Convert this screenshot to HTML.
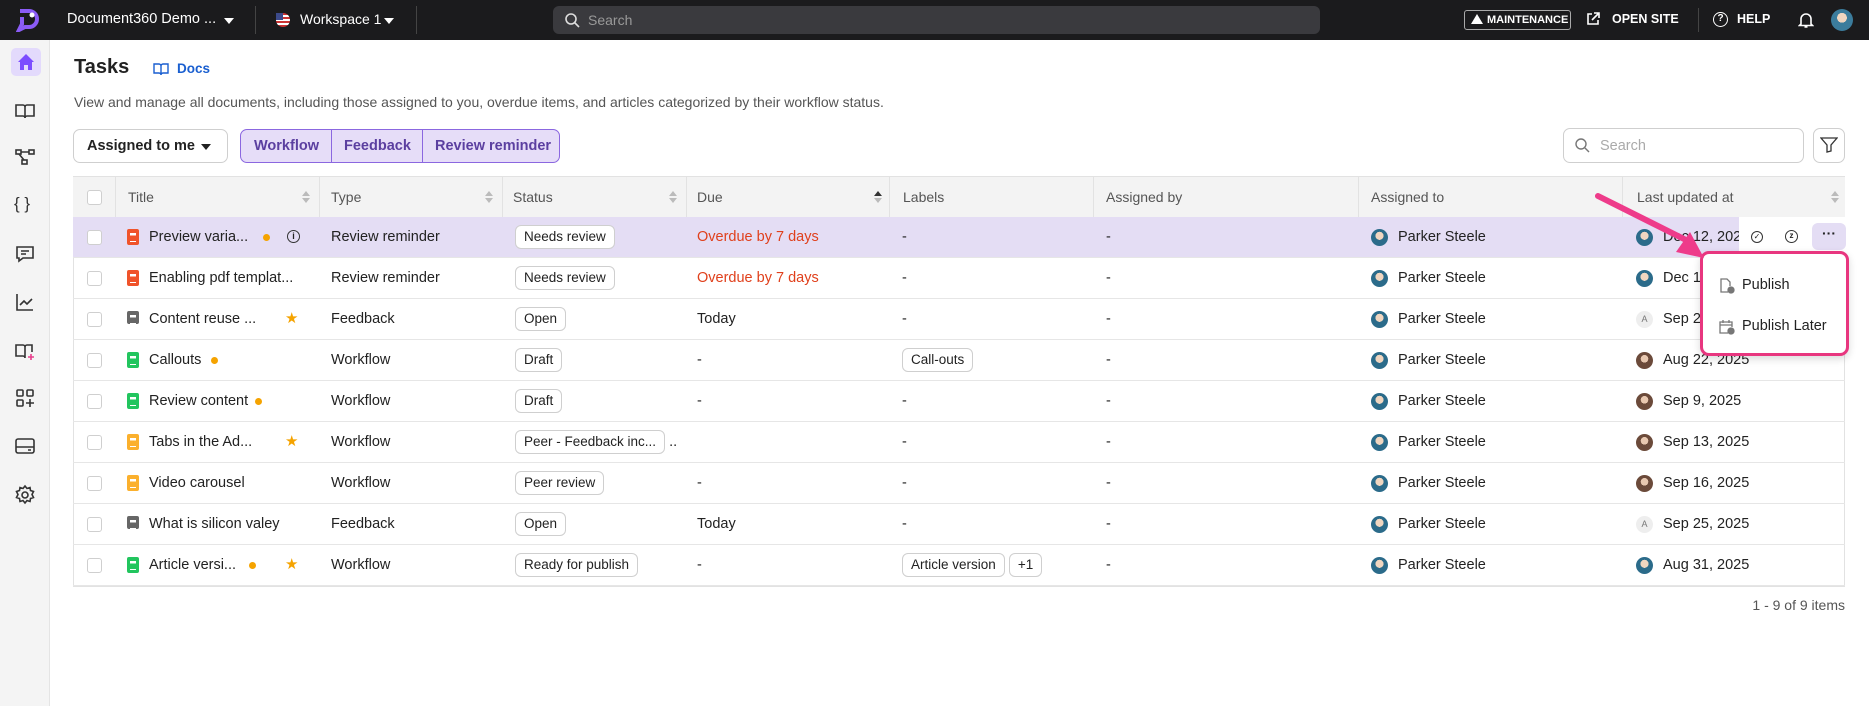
<!DOCTYPE html>
<html><head><meta charset="utf-8"><style>
*{box-sizing:border-box;margin:0;padding:0}
body{width:1869px;height:706px;overflow:hidden;background:#fff;font-family:"Liberation Sans",sans-serif;font-size:14px;color:#222;position:relative}
.a{position:absolute}
.top{left:0;top:0;width:1869px;height:40px;background:#1b1b1d;color:#fff}
.side{left:0;top:40px;width:50px;height:666px;background:#f4f4f4;border-right:1px solid #e4e4e4}
.si{position:absolute;left:14px;width:22px;height:22px}
.row{position:absolute;left:73px;width:1772px;height:41px;border-bottom:1px solid #e6e6e6}
.c{position:absolute;top:0;height:40px;line-height:40px;white-space:nowrap;font-size:14.5px}
.cb{position:absolute;left:14px;top:13px;width:15px;height:15px;border:1px solid #cfcfcf;border-radius:3px;background:#fff}
.badge{display:inline-block;height:24px;line-height:22px;padding:0 8px;border:1px solid #cfcfcf;border-radius:6px;background:#fff;font-size:13.5px;vertical-align:middle}
.av{position:absolute;top:12px;width:17px;height:17px;border-radius:50%;background:radial-gradient(circle at 50% 40%,#f0d6c0 0 30%,#2b6b8a 31%)}
.avw{background:radial-gradient(circle at 50% 40%,#e8c8b0 0 28%,#6b4a3a 29%)}
.avA{background:#eee;color:#777;font-size:9px;line-height:17px;text-align:center}
.doc{position:absolute;left:54px;top:12px;width:12px;height:16px;border-radius:2px}
.doc:after{content:"";position:absolute;left:3px;top:4px;width:6px;height:7px;border-top:1.5px solid #fff;border-bottom:1.5px solid #fff;box-shadow:inset 0 3px 0 -1.5px #fff}
.dot{position:absolute;top:17px;width:7px;height:7px;border-radius:50%;background:#f5a300}
.star{position:absolute;top:0;color:#f5a300;font-size:15px}
.hd{position:absolute;top:0;height:40px;line-height:40px;color:#555;font-size:14px}
.sep{position:absolute;top:0;width:1px;height:40px;background:#e2e2e2}
</style></head><body>
<div class="a top">
 <svg class="a" style="left:16px;top:8px" width="24" height="24" viewBox="0 0 24 24"><path d="M4 3h9a8 8 0 0 1 0 16H9l-6 3 3-6V9" fill="none" stroke="#8b5cf6" stroke-width="4"/><circle cx="16" cy="7" r="2.5" fill="#fff"/></svg>
 <div class="a" style="left:67px;top:11px;font-size:14.5px">Document360 Demo ...</div>
 <div class="a" style="left:224px;top:18px;border-left:5px solid transparent;border-right:5px solid transparent;border-top:6px solid #fff"></div>
 <div class="a" style="left:255px;top:6px;width:1px;height:28px;background:#444"></div>
 <div class="a" style="left:276px;top:13px;width:14px;height:14px;border-radius:50%;background:repeating-linear-gradient(#c33 0 2px,#fff 2px 4px)"><div style="width:7px;height:7px;background:#3c4a8a"></div></div>
 <div class="a" style="left:300px;top:11px;font-size:14px">Workspace 1</div>
 <div class="a" style="left:384px;top:18px;border-left:5px solid transparent;border-right:5px solid transparent;border-top:6px solid #fff"></div>
 <div class="a" style="left:416px;top:6px;width:1px;height:28px;background:#444"></div>
 <div class="a" style="left:553px;top:6px;width:767px;height:28px;background:#3a3a3e;border-radius:6px"></div>
 <svg class="a" style="left:564px;top:12px" width="16" height="16" viewBox="0 0 16 16"><circle cx="7" cy="7" r="5" fill="none" stroke="#ddd" stroke-width="1.6"/><path d="M11 11l4 4" stroke="#ddd" stroke-width="1.6"/></svg>
 <div class="a" style="left:588px;top:12px;color:#999;font-size:14px">Search</div>
 <div class="a" style="left:1464px;top:10px;width:107px;height:20px;border:1px solid #aaa;border-radius:3px;font-size:11px;font-weight:bold;line-height:18px;padding-left:22px">MAINTENANCE</div>
 <div class="a" style="left:1471px;top:14px;border-left:6px solid transparent;border-right:6px solid transparent;border-bottom:10px solid #fff"></div>
 <svg class="a" style="left:1585px;top:11px" width="16" height="16" viewBox="0 0 16 16"><path d="M7 3H3v10h10V9M9 2h5v5M14 2L7 9" fill="none" stroke="#fff" stroke-width="1.6"/></svg>
 <div class="a" style="left:1612px;top:12px;font-size:12.5px;font-weight:bold">OPEN SITE</div>
 <div class="a" style="left:1698px;top:8px;width:1px;height:24px;background:#444"></div>
 <div class="a" style="left:1713px;top:12px;width:15px;height:15px;border:1.6px solid #fff;border-radius:50%;font-size:10px;font-weight:bold;text-align:center;line-height:12px">?</div>
 <div class="a" style="left:1737px;top:12px;font-size:12.5px;font-weight:bold">HELP</div>
 <svg class="a" style="left:1798px;top:11px" width="16" height="18" viewBox="0 0 16 18"><path d="M3 13V8a5 5 0 0 1 10 0v5l1.5 1.5h-13z M6.5 16h3" fill="none" stroke="#fff" stroke-width="1.6"/></svg>
 <div class="a" style="left:1831px;top:9px;width:22px;height:22px;border-radius:50%;background:radial-gradient(circle at 50% 40%,#f0d6c0 0 28%,#3b7c9c 29%)"></div>
</div>
<div class="a side">
 <div class="a" style="left:11px;top:8px;width:30px;height:28px;border-radius:5px;background:#e3dafc"></div>
 <svg class="si" style="top:11px;left:15px" viewBox="0 0 22 22"><path d="M3 11L11 3l8 8h-2v8h-4v-5H9v5H5v-8z" fill="#7c4dff"/></svg>
 <svg class="si" style="top:60px" viewBox="0 0 22 22" fill="none" stroke="#333" stroke-width="1.6"><path d="M2 5h7a2 2 0 0 1 2 2v11a2 2 0 0 0-2-2H2zM20 5h-7a2 2 0 0 0-2 2v11a2 2 0 0 1 2-2h7z"/></svg>
 <svg class="si" style="top:106px" viewBox="0 0 22 22" fill="none" stroke="#333" stroke-width="1.6"><rect x="2" y="4" width="5" height="4"/><rect x="15" y="4" width="5" height="4"/><rect x="8" y="14" width="5" height="4"/><path d="M7 6h8M5 8l5 6"/></svg>
 <div class="a" style="left:14px;top:154px;font-size:17px;color:#333">{ }</div>
 <svg class="si" style="top:203px" viewBox="0 0 22 22" fill="none" stroke="#333" stroke-width="1.6"><path d="M3 4h16v11H9l-4 3v-3H3z M7 8h8M7 11h5"/></svg>
 <svg class="si" style="top:251px" viewBox="0 0 22 22" fill="none" stroke="#333" stroke-width="1.6"><path d="M3 3v16h16M6 14l4-4 3 3 5-5"/></svg>
 <svg class="si" style="top:300px" viewBox="0 0 22 22" fill="none" stroke="#333" stroke-width="1.6"><path d="M2 5h7a2 2 0 0 1 2 2v11a2 2 0 0 0-2-2H2zM18 12V5h-5a2 2 0 0 0-2 2"/><path d="M17 14v6M14 17h6" stroke="#e83e8c"/></svg>
 <svg class="si" style="top:347px" viewBox="0 0 22 22" fill="none" stroke="#333" stroke-width="1.6"><rect x="3" y="3" width="6" height="6" rx="1"/><rect x="13" y="3" width="6" height="6" rx="1"/><rect x="3" y="13" width="6" height="6" rx="1"/><path d="M16 12v8M12 16h8"/></svg>
 <svg class="si" style="top:395px" viewBox="0 0 22 22" fill="none" stroke="#333" stroke-width="1.6"><rect x="2" y="4" width="18" height="14" rx="2"/><path d="M2 12h18M14 15h3"/></svg>
 <svg class="si" style="top:444px" viewBox="0 0 22 22" fill="none" stroke="#333" stroke-width="1.6"><circle cx="11" cy="11" r="3"/><path d="M11 2l2 2.5 3-1 .5 3 3 1-1.5 3 1.5 3-3 1-.5 3-3-1-2 2.5-2-2.5-3 1-.5-3-3-1 1.5-3-1.5-3 3-1 .5-3 3 1z"/></svg>
</div>

<div class="a" style="left:74px;top:56px;font-size:20px;font-weight:bold;color:#222">Tasks</div>
<svg class="a" style="left:153px;top:62px" width="16" height="14" viewBox="0 0 16 14" fill="none" stroke="#1a5fd0" stroke-width="1.4"><path d="M1 2h5a2 2 0 0 1 2 2v9a2 2 0 0 0-2-2H1zM15 2h-5a2 2 0 0 0-2 2v9a2 2 0 0 1 2-2h5z"/></svg>
<div class="a" style="left:177px;top:61px;font-size:13.5px;color:#1a5fd0;font-weight:bold">Docs</div>
<div class="a" style="left:74px;top:94px;font-size:14px;color:#555">View and manage all documents, including those assigned to you, overdue items, and articles categorized by their workflow status.</div>

<div class="a" style="left:73px;top:129px;width:155px;height:34px;border:1px solid #cfcfcf;border-radius:7px;padding-left:13px;line-height:32px;font-size:14.5px;font-weight:bold;color:#222">Assigned to me</div>
<div class="a" style="left:201px;top:144px;border-left:5px solid transparent;border-right:5px solid transparent;border-top:6px solid #222"></div>
<div class="a" style="left:240px;top:129px;width:320px;height:34px;border:1px solid #8b67e0;border-radius:7px;background:#e6ddf8;color:#5b3fa0;font-size:14.5px;font-weight:bold;line-height:32px">
 <span class="a" style="left:13px">Workflow</span><span class="a" style="left:90px;top:0;width:1px;height:32px;background:#8b67e0"></span>
 <span class="a" style="left:103px">Feedback</span><span class="a" style="left:181px;top:0;width:1px;height:32px;background:#8b67e0"></span>
 <span class="a" style="left:194px">Review reminder</span>
</div>
<div class="a" style="left:1563px;top:128px;width:241px;height:35px;border:1px solid #cfcfcf;border-radius:7px"></div>
<svg class="a" style="left:1574px;top:137px" width="16" height="16" viewBox="0 0 16 16"><circle cx="7" cy="7" r="5" fill="none" stroke="#777" stroke-width="1.4"/><path d="M11 11l4 4" stroke="#777" stroke-width="1.4"/></svg>
<div class="a" style="left:1600px;top:138px;color:#aaa;font-size:14.5px">Search</div>
<div class="a" style="left:1813px;top:128px;width:32px;height:35px;border:1px solid #cfcfcf;border-radius:7px"></div>
<svg class="a" style="left:1820px;top:137px" width="18" height="16" viewBox="0 0 18 16"><path d="M1 1h16l-6 7v6l-4 1V8z" fill="none" stroke="#333" stroke-width="1.3"/></svg>

<div class="a" style="left:73px;top:176px;width:1772px;height:411px;border:1px solid #e2e2e2"></div>
<div class="row" style="top:177px;background:#f3f3f3">
 <div class="cb"></div><div class="sep" style="left:42px"></div>
 <div class="hd" style="left:55px">Title</div><div class="sep" style="left:246px"></div>
 <div class="hd" style="left:258px">Type</div><div class="sep" style="left:429px"></div>
 <div class="hd" style="left:440px">Status</div><div class="sep" style="left:613px"></div>
 <div class="hd" style="left:624px">Due</div><div class="sep" style="left:816px"></div>
 <div class="hd" style="left:830px">Labels</div><div class="sep" style="left:1020px"></div>
 <div class="hd" style="left:1033px">Assigned by</div><div class="sep" style="left:1285px"></div>
 <div class="hd" style="left:1298px">Assigned to</div><div class="sep" style="left:1549px"></div>
 <div class="hd" style="left:1564px">Last updated at</div>
 <svg class="a" style="left:229px;top:14px" width="8" height="12"><path d="M0 5l4-5 4 5zM0 7l4 5 4-5z" fill="#bbb"/></svg>
 <svg class="a" style="left:412px;top:14px" width="8" height="12"><path d="M0 5l4-5 4 5zM0 7l4 5 4-5z" fill="#bbb"/></svg>
 <svg class="a" style="left:596px;top:14px" width="8" height="12"><path d="M0 5l4-5 4 5zM0 7l4 5 4-5z" fill="#bbb"/></svg>
 <svg class="a" style="left:801px;top:14px" width="8" height="12"><path d="M0 5l4-5 4 5z" fill="#333"/><path d="M0 7l4 5 4-5z" fill="#bbb"/></svg>
 <svg class="a" style="left:1758px;top:14px" width="8" height="12"><path d="M0 5l4-5 4 5zM0 7l4 5 4-5z" fill="#bbb"/></svg>
</div>

<div class="row" style="top:217px;background:#e4ddf4"><div class="cb"></div><div class="doc" style="background:#f0532a"></div><div class="c" style="left:76px">Preview varia...</div><div class="dot" style="left:190px"></div><div class="a" style="left:214px;top:13px;width:13px;height:13px;border:1.4px solid #333;border-radius:50%;font-size:9px;text-align:center;line-height:10px;font-weight:bold">i</div><div class="c" style="left:258px">Review reminder</div><div class="c" style="left:442px"><span class="badge">Needs review</span></div><div class="c" style="left:624px;color:#e0401c">Overdue by 7 days</div><div class="c" style="left:829px">-</div><div class="c" style="left:1033px">-</div><div class="av" style="left:1298px"></div><div class="c" style="left:1325px">Parker Steele</div><div class="av" style="left:1563px"></div><div class="c" style="left:1590px">Dec 12, 2025</div>
 <div class="a" style="left:1666px;top:0;width:106px;height:40px;background:#fff"></div>
 <div class="a" style="left:1678px;top:14px;width:12px;height:12px;border:1.4px solid #333;border-radius:50%;font-size:8px;line-height:9px;text-align:center">✓</div>
 <div class="a" style="left:1712px;top:13px;width:13px;height:13px;border:1.4px solid #333;border-radius:50%;font-size:8px;line-height:10px;text-align:center;font-weight:bold">z</div>
 <div class="a" style="left:1739px;top:6px;width:34px;height:27px;background:#e4ddf4;border-radius:6px;text-align:center;line-height:20px;font-weight:bold">···</div>
</div>
<div class="row" style="top:258px"><div class="cb"></div><div class="doc" style="background:#f0532a"></div><div class="c" style="left:76px">Enabling pdf templat...</div><div class="c" style="left:258px">Review reminder</div><div class="c" style="left:442px"><span class="badge">Needs review</span></div><div class="c" style="left:624px;color:#e0401c">Overdue by 7 days</div><div class="c" style="left:829px">-</div><div class="c" style="left:1033px">-</div><div class="av" style="left:1298px"></div><div class="c" style="left:1325px">Parker Steele</div><div class="av" style="left:1563px"></div><div class="c" style="left:1590px">Dec 1</div></div>
<div class="row" style="top:299px"><div class="cb"></div><div class="doc" style="background:#666;height:13px"></div><div class="c" style="left:76px">Content reuse ...</div><div class="star" style="left:212px;top:10px">★</div><div class="c" style="left:258px">Feedback</div><div class="c" style="left:442px"><span class="badge">Open</span></div><div class="c" style="left:624px">Today</div><div class="c" style="left:829px">-</div><div class="c" style="left:1033px">-</div><div class="av" style="left:1298px"></div><div class="c" style="left:1325px">Parker Steele</div><div class="av avA" style="left:1563px">A</div><div class="c" style="left:1590px">Sep 2</div></div>
<div class="row" style="top:340px"><div class="cb"></div><div class="doc" style="background:#22c55e"></div><div class="c" style="left:76px">Callouts</div><div class="dot" style="left:138px"></div><div class="c" style="left:258px">Workflow</div><div class="c" style="left:442px"><span class="badge">Draft</span></div><div class="c" style="left:624px">-</div><div class="c" style="left:829px"><span class="badge">Call-outs</span></div><div class="c" style="left:1033px">-</div><div class="av" style="left:1298px"></div><div class="c" style="left:1325px">Parker Steele</div><div class="av avw" style="left:1563px"></div><div class="c" style="left:1590px">Aug 22, 2025</div></div>
<div class="row" style="top:381px"><div class="cb"></div><div class="doc" style="background:#22c55e"></div><div class="c" style="left:76px">Review content</div><div class="dot" style="left:182px"></div><div class="c" style="left:258px">Workflow</div><div class="c" style="left:442px"><span class="badge">Draft</span></div><div class="c" style="left:624px">-</div><div class="c" style="left:829px">-</div><div class="c" style="left:1033px">-</div><div class="av" style="left:1298px"></div><div class="c" style="left:1325px">Parker Steele</div><div class="av avw" style="left:1563px"></div><div class="c" style="left:1590px">Sep 9, 2025</div></div>
<div class="row" style="top:422px"><div class="cb"></div><div class="doc" style="background:#fbb02d"></div><div class="c" style="left:76px">Tabs in the Ad...</div><div class="star" style="left:212px;top:10px">★</div><div class="c" style="left:258px">Workflow</div><div class="c" style="left:442px"><span class="badge">Peer - Feedback inc...</span> ..</div><div class="c" style="left:829px">-</div><div class="c" style="left:1033px">-</div><div class="av" style="left:1298px"></div><div class="c" style="left:1325px">Parker Steele</div><div class="av avw" style="left:1563px"></div><div class="c" style="left:1590px">Sep 13, 2025</div></div>
<div class="row" style="top:463px"><div class="cb"></div><div class="doc" style="background:#fbb02d"></div><div class="c" style="left:76px">Video carousel</div><div class="c" style="left:258px">Workflow</div><div class="c" style="left:442px"><span class="badge">Peer review</span></div><div class="c" style="left:624px">-</div><div class="c" style="left:829px">-</div><div class="c" style="left:1033px">-</div><div class="av" style="left:1298px"></div><div class="c" style="left:1325px">Parker Steele</div><div class="av avw" style="left:1563px"></div><div class="c" style="left:1590px">Sep 16, 2025</div></div>
<div class="row" style="top:504px"><div class="cb"></div><div class="doc" style="background:#666;height:13px"></div><div class="c" style="left:76px">What is silicon valey</div><div class="c" style="left:258px">Feedback</div><div class="c" style="left:442px"><span class="badge">Open</span></div><div class="c" style="left:624px">Today</div><div class="c" style="left:829px">-</div><div class="c" style="left:1033px">-</div><div class="av" style="left:1298px"></div><div class="c" style="left:1325px">Parker Steele</div><div class="av avA" style="left:1563px">A</div><div class="c" style="left:1590px">Sep 25, 2025</div></div>
<div class="row" style="top:545px"><div class="cb"></div><div class="doc" style="background:#22c55e"></div><div class="c" style="left:76px">Article versi...</div><div class="dot" style="left:176px"></div><div class="star" style="left:212px;top:10px">★</div><div class="c" style="left:258px">Workflow</div><div class="c" style="left:442px"><span class="badge">Ready for publish</span></div><div class="c" style="left:624px">-</div><div class="c" style="left:829px"><span class="badge">Article version</span> <span class="badge">+1</span></div><div class="c" style="left:1033px">-</div><div class="av" style="left:1298px"></div><div class="c" style="left:1325px">Parker Steele</div><div class="av" style="left:1563px"></div><div class="c" style="left:1590px">Aug 31, 2025</div></div>

<div class="a" style="left:1700px;top:597px;width:145px;text-align:right;color:#555;font-size:14px">1 - 9 of 9 items</div>

<div class="a" style="left:1700px;top:251px;width:149px;height:105px;border:3px solid #e8367f;border-radius:9px;background:#fff;box-shadow:0 3px 8px rgba(0,0,0,.15)">
 <svg class="a" style="left:16px;top:24px" width="16" height="16" viewBox="0 0 16 16" fill="none" stroke="#777" stroke-width="1.3"><path d="M9 14H2V1h6l3 3v4"/><circle cx="12" cy="12" r="3" fill="#777"/></svg>
 <div class="a" style="left:39px;top:23px;font-size:14.5px">Publish</div>
 <svg class="a" style="left:16px;top:65px" width="16" height="16" viewBox="0 0 16 16" fill="none" stroke="#777" stroke-width="1.3"><path d="M9 14H1V3h12v5M1 6h12M4 1v3M10 1v3"/><circle cx="12" cy="12" r="3" fill="#777"/></svg>
 <div class="a" style="left:39px;top:64px;font-size:14.5px">Publish Later</div>
</div>
<svg class="a" style="left:1590px;top:190px" width="130" height="70" viewBox="0 0 130 70"><path d="M8 6L100 52" stroke="#ee3b8a" stroke-width="6" stroke-linecap="round"/><path d="M86 62l28 6-14-26z" fill="#ee3b8a"/></svg>
</body></html>
